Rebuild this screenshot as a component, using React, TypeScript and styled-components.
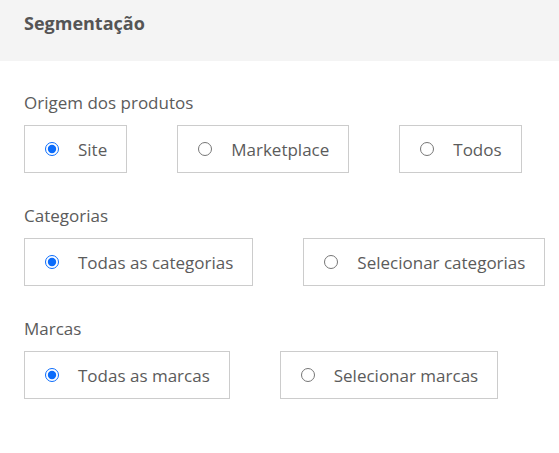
import styled, { createGlobalStyle } from 'styled-components';

const GlobalStyle = createGlobalStyle`
    body {
        margin: 0;
        background: #ffffff;
        font-family: "Open Sans", "Noto Sans", sans-serif;
    }
`

const Page = styled.div`
    width: 559px;
    color: #5b5b5b;
`

const Header = styled.div`
    height: 61px;
    box-sizing: border-box;
    padding: 11px 24px 0;
    background: #f4f4f4;
    font-size: 18px;
    line-height: 24px;
    font-weight: 700;
    color: #555555;
`

const Content = styled.div`
    display: flex;
    flex-direction: column;
    gap: 33px;
    padding: 32px 24px;
`

const Group = styled.div`
    display: flex;
    flex-direction: column;
    gap: 12px;
`

const GroupLabel = styled.div`
    font-size: 17px;
    line-height: 20px;
`

const OptionRow = styled.div`
    display: flex;
    gap: 50px;
`

const OptionBox = styled.label`
    display: flex;
    flex-shrink: 0;
    align-items: center;
    gap: 19px;
    height: 48px;
    box-sizing: border-box;
    padding: 0 19px 0 20px;
    border: 1px solid #cccccc;
    font-size: 17px;
    white-space: nowrap;
    cursor: pointer;
`

const Radio = styled.input`
    width: 14px;
    height: 14px;
    margin: 0;
    accent-color: #0b6cfb;
`

type Option = { label: string; checked?: boolean }

const groups: { name: string; key: string; options: Option[] }[] = [
    {
        name: 'Origem dos produtos',
        key: 'origem',
        options: [{ label: 'Site', checked: true }, { label: 'Marketplace' }, { label: 'Todos' }],
    },
    {
        name: 'Categorias',
        key: 'categorias',
        options: [{ label: 'Todas as categorias', checked: true }, { label: 'Selecionar categorias' }],
    },
    {
        name: 'Marcas',
        key: 'marcas',
        options: [{ label: 'Todas as marcas', checked: true }, { label: 'Selecionar marcas' }],
    },
]

export default function App() {
    return (
        <Page>
            <GlobalStyle />
            <Header>Segmentação</Header>
            <Content>
                {groups.map(group => (
                    <Group key={group.key}>
                        <GroupLabel>{group.name}</GroupLabel>
                        <OptionRow>
                            {group.options.map(opt => (
                                <OptionBox key={opt.label}>
                                    <Radio type="radio" name={group.key} defaultChecked={opt.checked} />
                                    {opt.label}
                                </OptionBox>
                            ))}
                        </OptionRow>
                    </Group>
                ))}
            </Content>
        </Page>
    );
}
